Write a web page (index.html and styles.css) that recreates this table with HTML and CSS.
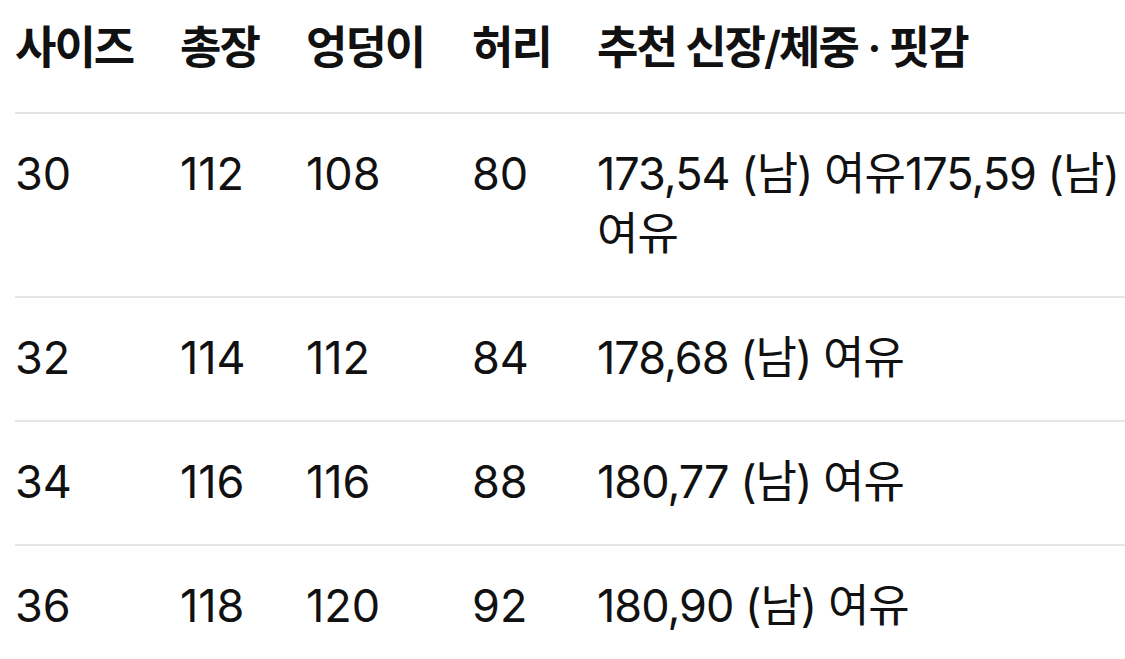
FILE: index.html
```html
<!DOCTYPE html>
<html lang="ko">
<head>
<meta charset="utf-8">
<title>사이즈 표</title>
<link rel="stylesheet" href="styles.css">
</head>
<body>
<table class="size-table">
  <colgroup>
    <col class="c1"><col class="c2"><col class="c3"><col class="c4"><col class="c5">
  </colgroup>
  <thead>
    <tr>
      <th>사이즈</th>
      <th>총장</th>
      <th>엉덩이</th>
      <th>허리</th>
      <th>추천 신장/체중 · 핏감</th>
    </tr>
  </thead>
  <tbody>
    <tr>
      <td>30</td><td>112</td><td>108</td><td>80</td>
      <td class="rec">173,54 (남) 여유175,59 (남) 여유</td>
    </tr>
    <tr>
      <td>32</td><td>114</td><td>112</td><td>84</td>
      <td class="rec">178,68 (남) 여유</td>
    </tr>
    <tr>
      <td>34</td><td>116</td><td>116</td><td>88</td>
      <td class="rec">180,77 (남) 여유</td>
    </tr>
    <tr>
      <td>36</td><td>118</td><td>120</td><td>92</td>
      <td class="rec">180,90 (남) 여유</td>
    </tr>
  </tbody>
</table>
</body>
</html>
```
FILE: styles.css
```css
html, body {
  margin: 0;
  padding: 0;
  background: #ffffff;
}
body {
  padding-left: 15px;
  font-family: Inter, "Noto Sans CJK KR", sans-serif;
  color: #111111;
  overflow: hidden;
}
.size-table {
  width: 1110px;
  border-collapse: collapse;
  table-layout: fixed;
}
.c1 { width: 165px; }
.c2 { width: 126px; }
.c3 { width: 166px; }
.c4 { width: 125px; }
.size-table th,
.size-table td {
  text-align: left;
  vertical-align: top;
  font-size: 45px;
  line-height: 60px;
  padding: 0;
  word-break: keep-all;
}
.size-table th {
  font-weight: 600;
  letter-spacing: -2px;
  padding-top: 18px;
  height: 113px;
  box-sizing: border-box;
  border-bottom: 2px solid #e3e3e3;
}
.size-table td {
  font-weight: 400;
  padding-top: 30px;
  padding-bottom: 32px;
}
.size-table td.rec {
  letter-spacing: -1px;
}
.size-table tbody tr {
  border-bottom: 2px solid #e6e6e6;
}
```
